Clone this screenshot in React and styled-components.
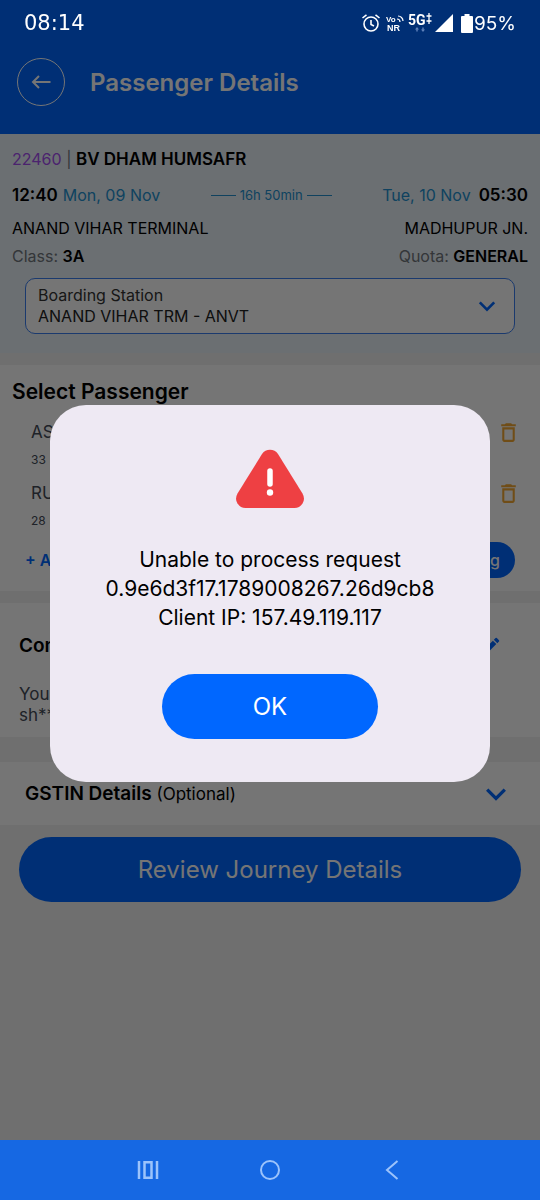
import styled, { createGlobalStyle } from "styled-components";
import { MdDeleteOutline, MdEdit } from "react-icons/md";

const GlobalStyle = createGlobalStyle`
  * {
    box-sizing: border-box;
  }

  body {
    margin: 0;
    background: #f1f1f1;
    color: #000;
    font-family: "Inter", "Liberation Sans", sans-serif;
    font-size: 16px;
  }

  h1, h2, p {
    margin: 0;
  }

  button, select {
    font-family: inherit;
    border: 0;
    cursor: pointer;
  }

  svg {
    display: block;
    flex: none;
  }
`;

const Page = styled.div`
  min-height: 100vh;
  display: flex;
  flex-direction: column;
`;

const Header = styled.header`
  background: #0067ff;
  padding-bottom: 28px;
`;

const StatusBar = styled.div`
  position: relative;
  z-index: 3;
  height: 46px;
  padding: 0 24px;
  display: flex;
  align-items: center;
  justify-content: space-between;
  color: #fff;
`;

const Clock = styled.time`
  font-family: "DejaVu Sans", sans-serif;
  font-size: 21px;
`;

const StatusIcons = styled.div`
  display: flex;
  align-items: center;
  gap: 3px;
`;

const Battery = styled.span`
  margin-left: 5px;
  display: flex;
  align-items: center;
  gap: 1px;
  font-size: 19px;
`;

const TitleRow = styled.div`
  margin-top: 12px;
  padding: 0 17px;
  display: flex;
  align-items: center;
  gap: 25px;

  h1 {
    color: #fff;
    font-size: 24px;
    font-weight: 600;
  }
`;

const BackButton = styled.button`
  width: 48px;
  height: 48px;
  padding: 0;
  display: flex;
  align-items: center;
  justify-content: center;
  background: none;
  border: 1px solid #fff;
  border-radius: 50%;
  color: #fff;
`;

const Train = styled.section`
  padding: 13px 12px 19px;
  background: #e9f2f9;
`;

const Row = styled.div`
  display: flex;
  align-items: center;
  justify-content: space-between;
  margin-top: ${(props) => props.$top || 0}px;
  line-height: 24px;
  font-size: 16px;
`;

const TrainName = styled.h2`
  font-size: 16px;
  font-weight: 400;
  line-height: 24px;
  color: #71767c;

  span {
    color: #a44cf0;
  }

  b {
    color: #000;
    font-size: 17px;
    font-weight: 600;
  }
`;

const Moment = styled.div`
  display: flex;
  align-items: center;
  gap: ${(props) => props.$gap}px;
  line-height: 26px;
  color: #2391d0;

  b {
    color: #000;
    font-size: 17px;
    font-weight: 600;
  }
`;

const Duration = styled.div`
  display: flex;
  align-items: center;
  gap: 4px;
  color: #2391d0;
  font-size: 13px;

  &::before,
  &::after {
    content: "";
    width: 25px;
    height: 1px;
    background: #2391d0;
  }
`;

const Fact = styled.span`
  color: #71767c;

  b {
    color: #000;
    font-weight: 600;
  }
`;

const Boarding = styled.div`
  margin: 10px 13px 0;
  height: 56px;
  padding: 0 18px 0 12px;
  display: flex;
  align-items: center;
  border: 1px solid #3b7ff0;
  border-radius: 10px;
  background: #fff;
  color: #0067ff;
`;

const BoardingField = styled.div`
  flex: 1;
  display: flex;
  flex-direction: column;

  label {
    line-height: 20px;
    font-size: 16px;
    color: #333;
  }

  select {
    height: 22px;
    padding: 0;
    appearance: none;
    background: none;
    font-size: 16px;
    color: #222;
  }
`;

const Passengers = styled.section`
  margin-top: 12px;
  padding: 14px 12px 13px;
  display: flex;
  flex-direction: column;
  gap: 13px;
  background: #fff;

  h2 {
    margin-bottom: 2px;
    line-height: 26px;
    font-size: 21px;
    font-weight: 600;
  }
`;

const Passenger = styled.div`
  padding: 0 7px 0 19px;
  display: flex;
  justify-content: space-between;
  color: #444b57;

  p {
    line-height: 24px;
    font-size: 17px;
  }

  small {
    display: block;
    margin-top: 8px;
    line-height: 16px;
    font-size: 12px;
  }
`;

const IconButton = styled.button`
  height: 24px;
  padding: 0;
  background: none;
  color: ${(props) => props.$color};
`;

const Actions = styled.div`
  padding: 0 13px;
  display: flex;
  align-items: center;
  justify-content: space-between;
`;

const AddLink = styled.a`
  color: #0067ff;
  font-size: 16px;
  font-weight: 600;
  text-decoration: none;
`;

const SmallButton = styled.button`
  height: 36px;
  padding: 0 15px;
  border-radius: 18px;
  background: #0067ff;
  color: #fff;
  font-size: 16px;
  font-weight: 500;
`;

const Contact = styled.section`
  margin-top: 12px;
  padding: 31px 38px 11px 19px;
  background: #fff;

  h2 {
    font-size: 19px;
    font-weight: 600;
  }

  p {
    margin-top: 26px;
    line-height: 21px;
    font-size: 17px;
    color: #444b57;
  }
`;

const Gstin = styled.section`
  margin-top: 25px;
  height: 63px;
  padding: 0 33px 0 25px;
  display: flex;
  align-items: center;
  justify-content: space-between;
  background: #fff;

  h2 {
    font-size: 19px;
    font-weight: 600;
  }

  span {
    font-size: 17px;
    font-weight: 400;
  }
`;

const MainButton = styled.button`
  height: 65px;
  border-radius: 33px;
  background: #0067ff;
  color: #fff;
  font-size: 24px;
`;

const ReviewButton = styled(MainButton)`
  margin: 12px 19px 80px;
`;

const Scrim = styled.div`
  position: fixed;
  inset: 0;
  z-index: 2;
  padding: 46px 50px 60px;
  display: flex;
  align-items: center;
  justify-content: center;
  background: rgba(0, 0, 0, 0.54);
`;

const Dialog = styled.div`
  width: 100%;
  max-width: 440px;
  padding: 44px 30px 43px;
  display: flex;
  flex-direction: column;
  align-items: center;
  border-radius: 36px;
  background: #eee9f3;
  text-align: center;

  p {
    margin: 36px 0 42px;
    line-height: 29px;
    font-size: 21px;
  }
`;

const OkButton = styled(MainButton)`
  width: 216px;
`;

const NavBar = styled.nav`
  position: fixed;
  inset: auto 0 0;
  z-index: 3;
  height: 60px;
  padding: 0 16%;
  display: grid;
  grid-template-columns: repeat(3, 1fr);
  background: #1668e3;

  button {
    padding: 0;
    display: flex;
    align-items: center;
    justify-content: center;
    background: none;
    color: #9cc3fb;
  }
`;

const Chevron = ({ size, color }) => (
  <svg width={size} height={size} viewBox="0 0 20 20" fill="none" stroke={color} strokeWidth="3">
    <path d="M2 6l8 8 8-8" />
  </svg>
);

const AlarmIcon = () => (
  <svg width="20" height="20" viewBox="0 0 20 20" fill="none" stroke="#fff" strokeWidth="1.600">
    <circle cx="10" cy="11" r="7" />
    <path d="M10 7v4.500l3 1.500M1.500 5L5.500 1.800M18.500 5l-4-3.200" />
  </svg>
);

const VoNrIcon = () => (
  <svg width="21" height="20" viewBox="0 0 21 20" fill="#fff">
    <text x="2" y="9" fontFamily="Liberation Sans, sans-serif" fontSize="8" fontWeight="700">Vo</text>
    <text x="3" y="18" fontFamily="Liberation Sans, sans-serif" fontSize="9" fontWeight="700">NR</text>
    <path d="M13 6a3 3 0 0 1 3 3M14 3a5 5 0 0 1 5 5" fill="none" stroke="#fff" strokeWidth="1.200" />
  </svg>
);

const FiveGIcon = () => (
  <svg width="24" height="24" viewBox="0 0 24 24" fill="#fff">
    <text x="0" y="14" fontFamily="Roboto, sans-serif" fontSize="14" fontWeight="700">5G</text>
    <path d="M21 2v11M18.500 5h5M18.500 10h5" stroke="#fff" strokeWidth="1.300" />
    <path d="M9 16l2 2.500h-1.300v2h-1.400v-2H7zM15 21l-2-2.500h1.300v-2h1.400v2H17z" fill="#5f82bb" />
  </svg>
);

const SignalIcon = () => (
  <svg width="18" height="18" viewBox="0 0 18 18" fill="#fff">
    <path d="M18 0v18H0z" />
  </svg>
);

const BatteryIcon = () => (
  <svg width="12" height="19" viewBox="0 0 12 19" fill="#fff">
    <path d="M3.500 0h5v2H11a1 1 0 0 1 1 1v15a1 1 0 0 1-1 1H1a1 1 0 0 1-1-1V3a1 1 0 0 1 1-1h2.500z" />
  </svg>
);

const AlertIcon = () => (
  <svg width="68" height="60" viewBox="0 0 68 60">
    <path
      d="M26 5Q29 .800 34 .800T42 5L66.500 44.500Q69.500 50 66.500 54.500T58.500 59H9.500Q4.500 59 1.500 54.500T1.500 44.500z"
      fill="#ee4043"
    />
    <path d="M34 22v13" stroke="#fff" strokeWidth="5.500" strokeLinecap="round" />
    <circle cx="34" cy="43.500" r="3.200" fill="#fff" />
  </svg>
);

const passengers = [
  { name: "ASHOK", info: "33 | Male" },
  { name: "RUBY", info: "28 | Female" },
];

const App = () => {
  return (
    <Page>
      <GlobalStyle />

      <Header>
        <StatusBar>
          <Clock>08:14</Clock>
          <StatusIcons>
            <AlarmIcon />
            <VoNrIcon />
            <FiveGIcon />
            <SignalIcon />
            <Battery>
              <BatteryIcon />
              95%
            </Battery>
          </StatusIcons>
        </StatusBar>
        <TitleRow>
          <BackButton aria-label="Back">
            <svg width="20" height="16" viewBox="0 0 20 16" fill="none" stroke="currentColor" strokeWidth="2">
              <path d="M19.500 8H2M8 2L2 8L8 14" />
            </svg>
          </BackButton>
          <h1>Passenger Details</h1>
        </TitleRow>
      </Header>

      <Train>
        <TrainName>
          <span>22460</span> | <b>BV DHAM HUMSAFR</b>
        </TrainName>
        <Row $top={11}>
          <Moment $gap={5}>
            <b>12:40</b> Mon, 09 Nov
          </Moment>
          <Duration>16h 50min</Duration>
          <Moment $gap={8}>
            Tue, 10 Nov <b>05:30</b>
          </Moment>
        </Row>
        <Row $top={8}>
          <span>ANAND VIHAR TERMINAL</span>
          <span>MADHUPUR JN.</span>
        </Row>
        <Row $top={4}>
          <Fact>Class: <b>3A</b></Fact>
          <Fact>Quota: <b>GENERAL</b></Fact>
        </Row>
        <Boarding>
          <BoardingField>
            <label htmlFor="boarding">Boarding Station</label>
            <select id="boarding">
              <option>ANAND VIHAR TRM - ANVT</option>
            </select>
          </BoardingField>
          <Chevron size={18} color="#0067ff" />
        </Boarding>
      </Train>

      <Passengers>
        <h2>Select Passenger</h2>
        {passengers.map((item) => (
          <Passenger key={item.name}>
            <div>
              <p>{item.name}</p>
              <small>{item.info}</small>
            </div>
            <IconButton $color="#f5a932" aria-label={`Remove ${item.name}`}>
              <MdDeleteOutline size={25} />
            </IconButton>
          </Passenger>
        ))}
        <Actions>
          <AddLink href="#add">+ Add New</AddLink>
          <SmallButton>Add Existing</SmallButton>
        </Actions>
      </Passengers>

      <Contact>
        <Row>
          <h2>Contact Details</h2>
          <IconButton $color="#0067ff" aria-label="Edit contact details">
            <MdEdit size={22} />
          </IconButton>
        </Row>
        <p>
          Your ticket will be sent to
          <br />
          sh**********
        </p>
      </Contact>

      <Gstin>
        <h2>
          GSTIN Details <span>(Optional)</span>
        </h2>
        <Chevron size={22} color="#0067ff" />
      </Gstin>

      <ReviewButton>Review Journey Details</ReviewButton>

      <Scrim>
        <Dialog role="alertdialog" aria-modal="true" aria-describedby="message">
          <AlertIcon />
          <p id="message">
            Unable to process request
            <br />
            0.9e6d3f17.1789008267.26d9cb8
            <br />
            Client IP: 157.49.119.117
          </p>
          <OkButton>OK</OkButton>
        </Dialog>
      </Scrim>

      <NavBar>
        <button aria-label="Recent apps">
          <svg width="22" height="18" viewBox="0 0 22 18" fill="none" stroke="currentColor" strokeWidth="2.500">
            <path d="M2 0v18M20 0v18M7.500 1.300h7v15.400h-7z" />
          </svg>
        </button>
        <button aria-label="Home">
          <svg width="20" height="20" viewBox="0 0 20 20" fill="none" stroke="currentColor" strokeWidth="2">
            <circle cx="10" cy="10" r="9" />
          </svg>
        </button>
        <button aria-label="Back">
          <svg width="14" height="20" viewBox="0 0 14 20" fill="none" stroke="currentColor" strokeWidth="2">
            <path d="M12.500 1L2 10l10.500 9" />
          </svg>
        </button>
      </NavBar>
    </Page>
  );
};

export default App;
